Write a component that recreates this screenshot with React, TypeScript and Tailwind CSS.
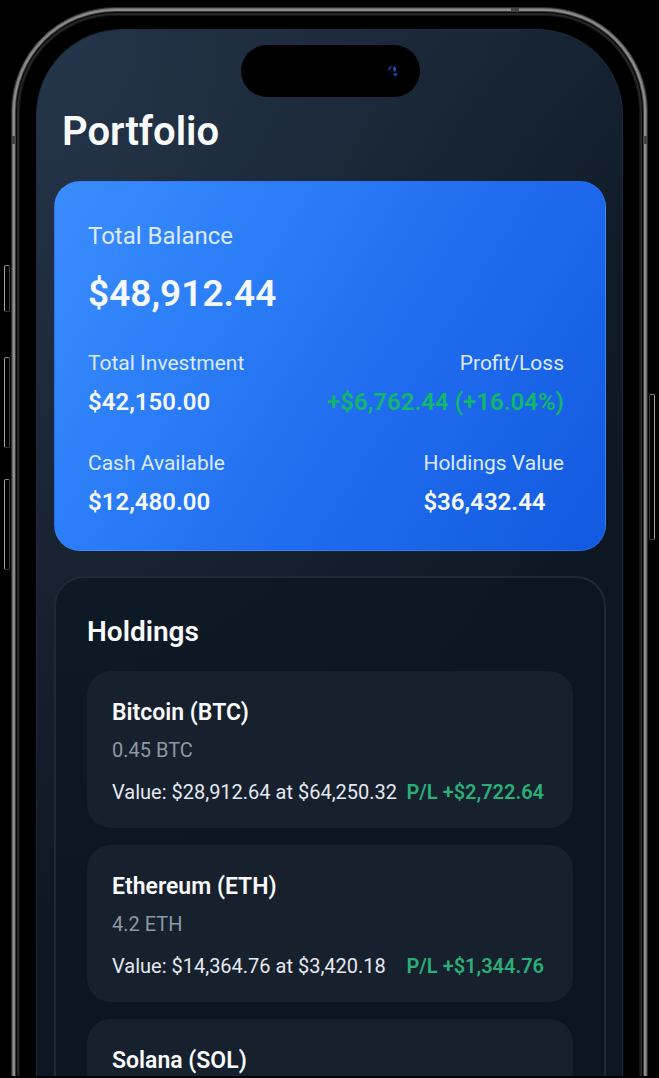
import type { ReactNode } from "react";

interface Holding {
  name: string;
  symbol: string;
  amount?: string;
  value?: string;
  price?: string;
  profit?: string;
}

const holdings: Holding[] = [
  {
    name: "Bitcoin",
    symbol: "BTC",
    amount: "0.45 BTC",
    value: "$28,912.64",
    price: "$64,250.32",
    profit: "+$2,722.64",
  },
  {
    name: "Ethereum",
    symbol: "ETH",
    amount: "4.2 ETH",
    value: "$14,364.76",
    price: "$3,420.18",
    profit: "+$1,344.76",
  },
  { name: "Solana", symbol: "SOL" },
];

interface StatProps {
  label: string;
  value: string;
  className?: string;
  valueClassName?: string;
}

function Stat({ label, value, className = "", valueClassName = "text-[#f4f9ff]" }: StatProps) {
  return (
    <div className={`flex flex-col gap-2 ${className}`}>
      <dt className="text-[21px] leading-[30px] text-[#dbeaff]">{label}</dt>
      <dd className={`text-2xl leading-8 font-semibold ${valueClassName}`}>{value}</dd>
    </div>
  );
}

function BalanceCard() {
  return (
    <section className="flex flex-col gap-[29px] rounded-[26px] border border-[#4a90f5]/30 bg-[linear-gradient(122deg,#3b8dfd_0%,#2d7ff8_28%,#206cef_58%,#125adf_100%)] pt-[39px] pr-[41px] pb-8 pl-[33px]">
      <div className="flex flex-col gap-[18px]">
        <h2 className="text-2xl leading-[30px] text-[#dbeaff]">Total Balance</h2>
        <p className="text-[37px] leading-[50px] font-semibold text-[#f4f9ff]">$48,912.44</p>
      </div>
      <dl className="flex flex-col gap-[30px]">
        <div className="flex justify-between">
          <Stat label="Total Investment" value="$42,150.00" />
          <Stat
            label="Profit/Loss"
            value="+$6,762.44 (+16.04%)"
            className="text-right"
            valueClassName="text-[#13b76c]"
          />
        </div>
        <div className="flex justify-between">
          <Stat label="Cash Available" value="$12,480.00" />
          <Stat label="Holdings Value" value="$36,432.44" />
        </div>
      </dl>
    </section>
  );
}

function HoldingCard({ holding }: { holding: Holding }) {
  return (
    <li className="flex min-h-[157px] flex-col gap-[13px] rounded-[24px] bg-[#17202d] pt-[26px] pr-[29px] pb-[21px] pl-[25px]">
      <div className="flex flex-col gap-[7px]">
        <h3 className="text-[23px] leading-8 font-semibold text-[#f8fafc]">
          {holding.name} ({holding.symbol})
        </h3>
        {holding.amount && <p className="text-xl leading-7 text-[#8f97a5]">{holding.amount}</p>}
      </div>
      {holding.value && (
        <p className="flex justify-between text-xl leading-[30px] whitespace-nowrap text-[#e5e9f0]">
          <span>
            Value: {holding.value} at {holding.price}
          </span>
          <span className="font-semibold text-[#2aaf78]">P/L {holding.profit}</span>
        </p>
      )}
    </li>
  );
}

function SideButton({ className }: { className: string }) {
  return (
    <span
      className={`w-[6px] shrink-0 rounded-[2px] border border-[#3c3c3c] border-t-[#8a8a8a] bg-black ${className}`}
    />
  );
}

function PhoneFrame({ children }: { children: ReactNode }) {
  return (
    <div className="flex h-screen overflow-hidden border-b-2 border-black bg-black pt-[7px]">
      <div className="flex w-[11px] shrink-0 flex-col items-center pt-[258px] pl-[3px]">
        <SideButton className="mb-[45px] h-[47px] border-l-[#a5a5a5]" />
        <SideButton className="mb-[31px] h-[91px] border-l-[#a5a5a5]" />
        <SideButton className="h-[91px] border-l-[#a5a5a5]" />
      </div>

      {/* metal rail, then the black bezel around the screen */}
      <div className="relative h-max min-w-0 flex-1 rounded-t-[104px] border border-[#2c2c2c] bg-black px-6 pt-[21px] shadow-[inset_0_0_0_1px_#686868,inset_0_0_0_3px_#8c8c8c,inset_0_0_0_4px_#3a3a3a,inset_0_0_0_5px_#060606,inset_0_0_0_7px_#262626,inset_0_0_0_8px_#131313]">
        {/* antenna bands */}
        <span className="absolute top-32 left-0 h-2 w-1 bg-[#444]" />
        <span className="absolute top-32 right-0 h-2 w-1 bg-[#444]" />
        <span className="absolute top-0 right-32 h-1 w-2 bg-[#444]" />

        <div className="rounded-t-[86px] border-x border-t border-[#1c2b3d] bg-[#0c1723] bg-[linear-gradient(180deg,#2033484d_0px,transparent_260px),radial-gradient(ellipse_680px_920px_at_0%_0%,#26364c_0%,#1f2d3f_28%,#172331_58%,transparent_100%)] pt-[15px] pr-4 pl-[17px]">
          {children}
        </div>
      </div>

      <div className="flex w-[11px] shrink-0 flex-col items-center pt-[387px] pr-[3px]">
        <SideButton className="h-[146px] border-r-[#a5a5a5]" />
      </div>
    </div>
  );
}

function DynamicIsland() {
  return (
    <div className="flex h-[52px] w-[179px] items-center justify-end self-center rounded-full bg-black pr-5">
      <svg width="13" height="14" viewBox="0 0 13 14" fill="none" aria-hidden="true">
        <circle cx="6.5" cy="7" r="6" fill="#03060f" />
        <path d="M2 6.2c0-2 1-3.2 2.4-3.4" stroke="#1d3f93" strokeWidth="1.4" />
        <ellipse cx="7.6" cy="5" rx="1.4" ry="2.8" fill="#2350c0" />
        <ellipse cx="8.4" cy="10.6" rx="2" ry="1.7" fill="#1b3f9c" />
      </svg>
    </div>
  );
}

export default function App() {
  return (
    <PhoneFrame>
      <main className="flex flex-col gap-[25px] font-['Roboto','Liberation_Sans',sans-serif]">
        <header className="flex flex-col gap-[11px]">
          <DynamicIsland />
          <h1 className="pl-2 text-[40px] leading-12 font-semibold text-[#f8fafc]">Portfolio</h1>
        </header>
        <BalanceCard />
        <section className="flex flex-col gap-[21px] rounded-t-[30px] border-2 border-b-0 border-[#1d2935] bg-[#0b1522]/65 px-[31px] pt-9">
          <h2 className="text-[28px] leading-9 font-semibold text-[#f8fafc]">Holdings</h2>
          <ul className="flex flex-col gap-[17px]">
            {holdings.map((holding) => (
              <HoldingCard key={holding.symbol} holding={holding} />
            ))}
          </ul>
        </section>
      </main>
    </PhoneFrame>
  );
}
